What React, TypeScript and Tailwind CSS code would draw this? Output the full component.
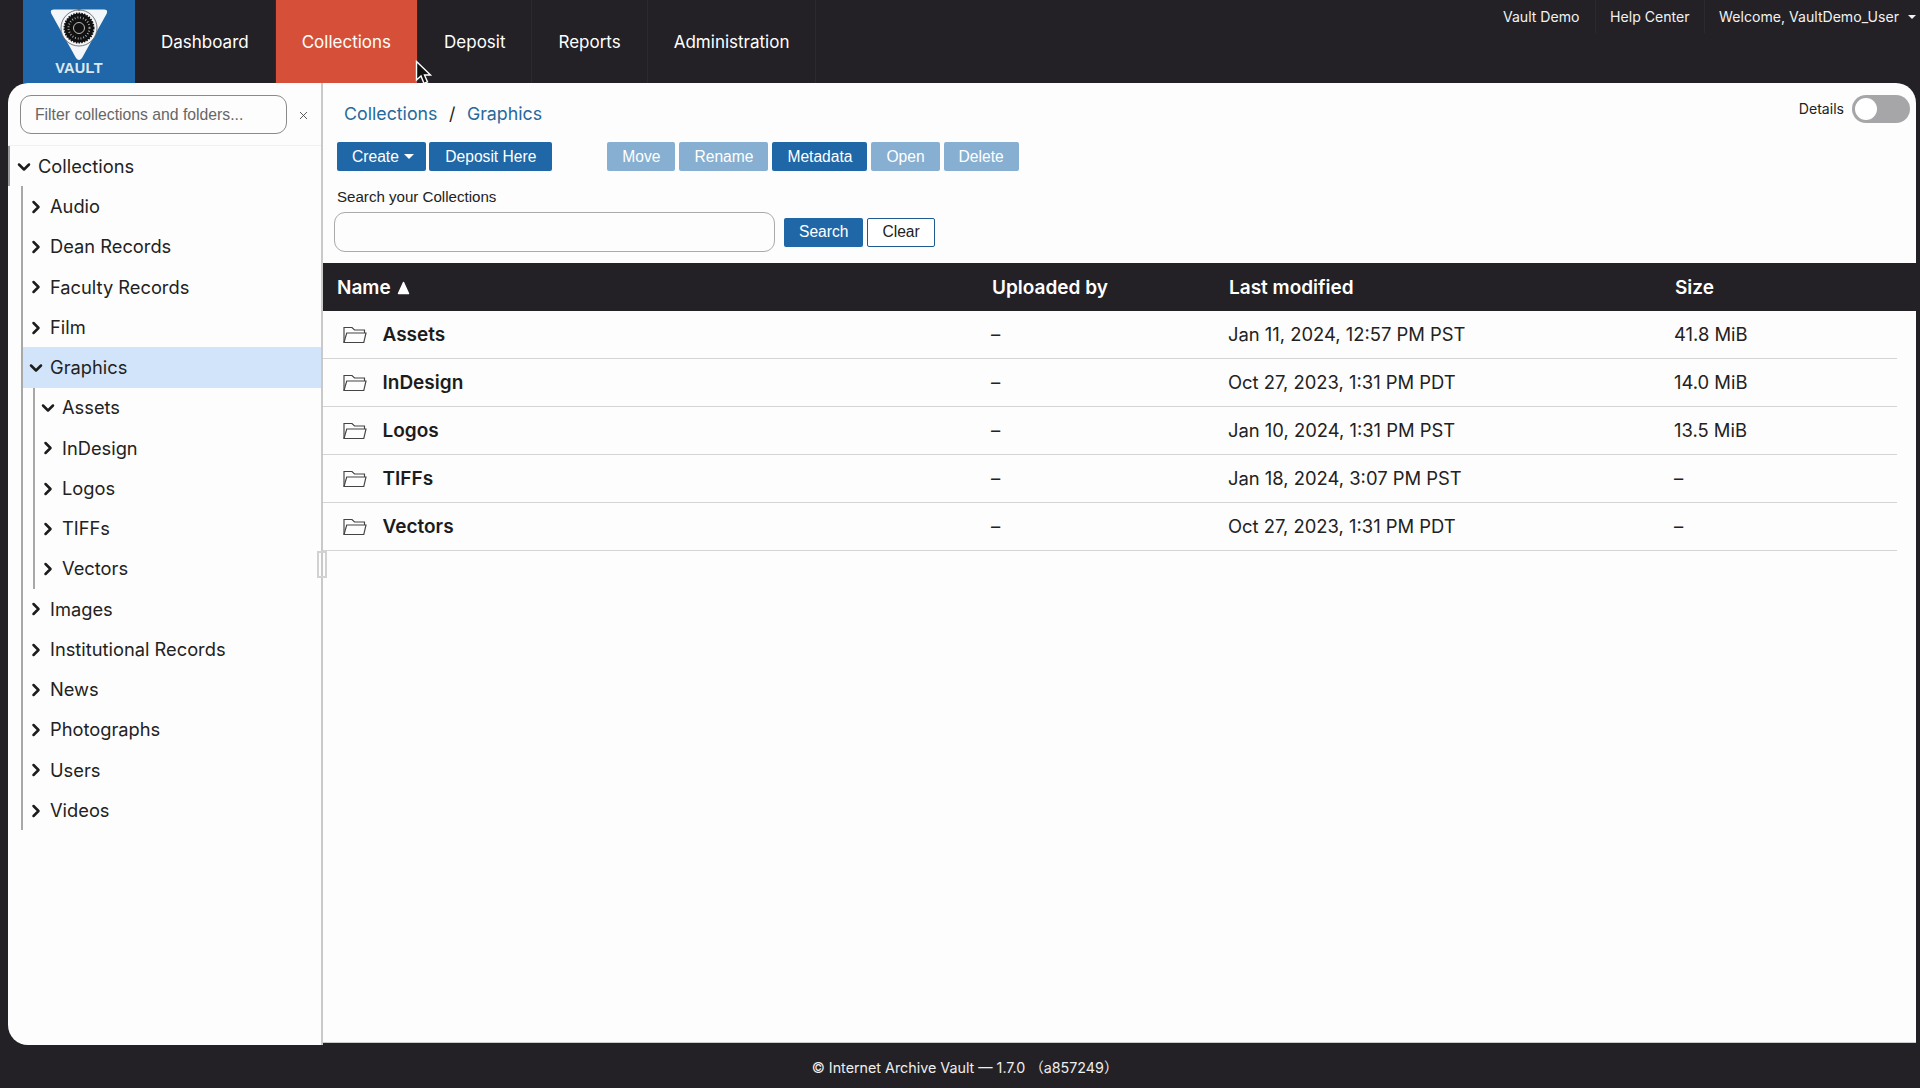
import { ChevronDown, ChevronRight, X } from "lucide-react";

const inter = "font-['Inter','Noto_Sans_CJK_SC',sans-serif]";
const arial = "font-['Liberation_Sans',Arial,sans-serif]";

const Caret = ({ big }: { big?: boolean }) => (
  <span
    className={`inline-block h-0 w-0 border-x-transparent border-t-current ${
      big ? "border-x-[5px] border-t-[5px]" : "border-x-[4px] border-t-[4px]"
    }`}
  />
);

const Logo = () => (
  <div className="flex h-full w-[112px] flex-col items-center bg-[#1f67a8]">
    <svg width="60" height="53" viewBox="0 0 60 53" className="mt-[8px] shrink-0">
      <path
        d="M5 1.5 H55 Q59.5 1.5 57.5 6 L33 50 Q30 54 27 50 L2.5 6 Q.5 1.5 5 1.5Z"
        fill="#f4f7fa"
      />
      <circle cx="30" cy="20" r="18" fill="#f4f7fa" stroke="#55575c" strokeWidth="0.8" />
      <circle cx="30" cy="20" r="14.5" fill="#111" stroke="#111" strokeDasharray="1.5 1.2" strokeWidth="2" />
      <circle cx="30" cy="20" r="10.5" fill="none" stroke="#bbb" strokeDasharray="0.8 2" strokeWidth="2" />
      <circle cx="30" cy="20" r="5.5" fill="none" stroke="#e4e4e4" strokeWidth="0.8" />
      <circle cx="30" cy="1.5" r="1" fill="none" stroke="#555" strokeWidth="0.7" />
    </svg>
    <div className={`${arial} text-[14.5px] leading-[14px] font-bold tracking-[0.3px] text-[#dce9f3]`}>
      VAULT
    </div>
  </div>
);

const navItems = ["Dashboard", "Collections", "Deposit", "Reports", "Administration"];

const Header = () => (
  <header className={`${inter} flex h-[83px] shrink-0 pl-[23px] text-white`}>
    <Logo />
    <nav className="flex text-[17px]">
      {navItems.map((item) => (
        <a
          key={item}
          className={`flex items-center border-r border-[#2c2a30] px-[26px] pt-[3px] ${
            item === "Collections" ? "bg-[#d64f38]" : ""
          }`}
        >
          {item}
        </a>
      ))}
    </nav>
    <div className="ml-auto flex h-[33px] items-center text-[14.1px] text-[#f1f1f1]">
      <span className="flex h-full items-center border-r border-[#2c2a30] pr-[15px]">Vault Demo</span>
      <span className="flex h-full items-center border-r border-[#2c2a30] px-[14.5px]">Help Center</span>
      <span className="flex h-full items-center pl-[14px]">Welcome, VaultDemo_User</span>
      <span className="mr-[4px] ml-[9px] flex">
        <Caret />
      </span>
    </div>
  </header>
);

type Node = { name: string; open?: boolean; active?: boolean; children?: string[] };

const topLevel: Node[] = [
  { name: "Audio" },
  { name: "Dean Records" },
  { name: "Faculty Records" },
  { name: "Film" },
  { name: "Graphics", open: true, active: true, children: ["InDesign", "Logos", "TIFFs", "Vectors"] },
  { name: "Images" },
  { name: "Institutional Records" },
  { name: "News" },
  { name: "Photographs" },
  { name: "Users" },
  { name: "Videos" },
];

const TreeRow = ({ name, open, active, root }: { name: string; open?: boolean; active?: boolean; root?: boolean }) => (
  <div
    className={`flex h-[40.25px] items-center gap-[4.5px] pt-[1px] text-[18.3px] text-[#222] ${
      root ? "pl-[3.5px]" : "pl-[2.5px]"
    } ${active ? "bg-[#d2e4fa]" : ""}`}
  >
    <span className="flex w-[20px] shrink-0 justify-center">
      {open ? (
        <ChevronDown size={22} strokeWidth={3} color="#1c1c1c" />
      ) : (
        <ChevronRight size={22} strokeWidth={3} color="#1c1c1c" />
      )}
    </span>
    {name}
  </div>
);

const Sidebar = () => (
  <aside className={`${inter} relative z-10 flex w-[315px] shrink-0 flex-col rounded-l-[20px] border-r-2 border-[#c9c9c9] bg-[#fdfdfd]`}>
    <div className="flex h-[63px] shrink-0 items-start border-b border-[#f1f1f1] pt-[12px] pl-[12px]">
      <input
        placeholder="Filter collections and folders..."
        className={`${arial} h-[39px] w-[267px] rounded-[11px] border border-[#8a8a8a] px-[14px] text-[15.75px] placeholder:text-[#666]`}
      />
      <span className="mt-[14px] ml-[10px] text-[#444]">
        <X size={13} strokeWidth={1.6} />
      </span>
    </div>
    <div className="h-[40.25px] border-l-2 border-[#9a9a9a]">
      <TreeRow name="Collections" open root />
    </div>
    <div className="ml-[13px] border-l-2 border-[#a8a8a8]">
      {topLevel.map((node) => (
        <div key={node.name}>
          <TreeRow name={node.name} open={node.open} active={node.active} />
          {node.children && (
            <div className="ml-[10px] border-l-2 border-[#a8a8a8]">
              <TreeRow name="Assets" open />
              {node.children.map((child) => (
                <TreeRow key={child} name={child} />
              ))}
            </div>
          )}
        </div>
      ))}
    </div>
    <div className="absolute top-[468px] right-[-6px] h-[27px] w-[10px] border-2 border-[#d2d2d2]" />
  </aside>
);

const Btn = ({ label, dim, caret, wide }: { label: string; dim?: boolean; caret?: boolean; wide?: boolean }) => (
  <button
    className={`flex h-[29px] items-center gap-[5px] rounded-[2px] text-[15.6px] text-white ${
      wide ? "px-[16px]" : "px-[15px]"
    } ${caret ? "pr-[12.5px]" : ""} ${dim ? "bg-[#86afd1] text-[#e4edf5]" : "bg-[#1f67a6]"}`}
  >
    {label}
    {caret && <Caret big />}
  </button>
);

const FolderIcon = () => (
  <svg width="24" height="18" viewBox="0 0 24 18" fill="none" stroke="#444" strokeWidth="1.15" className="shrink-0">
    <path d="M1 16.5 V1.5 H9 L11.5 4 H21.5 V7" />
    <path d="M3.7 7 H23 L20.8 16.5 H1 Z" />
  </svg>
);

const rows = [
  { name: "Assets", modified: "Jan 11, 2024, 12:57 PM PST", size: "41.8 MiB" },
  { name: "InDesign", modified: "Oct 27, 2023, 1:31 PM PDT", size: "14.0 MiB" },
  { name: "Logos", modified: "Jan 10, 2024, 1:31 PM PST", size: "13.5 MiB" },
  { name: "TIFFs", modified: "Jan 18, 2024, 3:07 PM PST", size: "–" },
  { name: "Vectors", modified: "Oct 27, 2023, 1:31 PM PDT", size: "–" },
];

const Main = () => (
  <section className="relative mb-[2px] flex min-w-0 flex-1 flex-col rounded-tr-[20px] border-b border-[#c9c9c9] bg-[#fdfdfd]">
    <div className="absolute top-[12px] right-[6px] flex items-center gap-[8px]">
      <span className={`${inter} mb-[1px] text-[14.1px] text-[#222]`}>Details</span>
      <div className="flex h-[28px] w-[58px] items-center rounded-full bg-[#a6a6a9] pl-[3px]">
        <div className="h-[22px] w-[22px] rounded-full bg-white" />
      </div>
    </div>
    <div className={`${inter} flex h-[59px] items-end gap-[11.5px] pb-[14px] pl-[21px] text-[17.8px] text-[#222]`}>
      <a className="text-[#26699c]">Collections</a>
      <span>/</span>
      <a className="text-[#26699c]">Graphics</a>
    </div>
    <div className={`${arial} flex pl-[14px]`}>
      <div className="flex gap-[3px]">
        <Btn label="Create" caret />
        <Btn label="Deposit Here" wide />
      </div>
      <div className="ml-[55px] flex gap-[4px]">
        <Btn label="Move" dim />
        <Btn label="Rename" dim />
        <Btn label="Metadata" />
        <Btn label="Open" dim />
        <Btn label="Delete" dim />
      </div>
    </div>
    <label className={`${arial} mt-[17px] pl-[14px] text-[15.1px] leading-[17px] text-[#222]`}>
      Search your Collections
    </label>
    <div className={`${arial} mt-[7px] flex items-center pl-[11px]`}>
      <input className="h-[40px] w-[441px] rounded-[11px] border border-[#aaa]" />
      <div className="ml-[9px] flex h-[29px] items-center rounded-[2px] bg-[#1f67a6] px-[15px] text-[15.6px] text-white">
        Search
      </div>
      <div className="ml-[4px] flex h-[29px] items-center rounded-[2px] border border-[#1f5b8f] bg-white px-[14px] text-[15.6px] text-[#222]">
        Clear
      </div>
    </div>
    <div className={`${inter} mt-[11px] grid h-[48px] shrink-0 grid-cols-[669px_237px_446px_1fr] items-center bg-[#232126] pt-[2.5px] text-[19px] font-semibold text-white`}>
      <div className="flex items-center gap-[6px] pl-[14px]">
        Name
        <svg width="13" height="14" viewBox="0 0 13 14" fill="#fff" stroke="#fff" strokeWidth="1.5" strokeLinejoin="round">
          <path d="M6.5 1.5 L11.5 12.5 H1.5 Z" />
        </svg>
      </div>
      <div>Uploaded by</div>
      <div>Last modified</div>
      <div>Size</div>
    </div>
    <div className={`${inter} mr-[19px] text-[18.4px] text-[#222]`}>
      {rows.map((row) => (
        <div
          key={row.name}
          className="grid h-[48px] grid-cols-[668px_237px_446px_1fr] items-center border-b border-[#d4d4d4]"
        >
          <div className="flex items-center gap-[15.5px] pl-[20px] text-[19px] font-semibold text-[#1c1c1c]">
            <FolderIcon />
            <span className="pt-[1.5px]">{row.name}</span>
          </div>
          <div>–</div>
          <div>{row.modified}</div>
          <div>{row.size}</div>
        </div>
      ))}
    </div>
  </section>
);

const Cursor = () => (
  <svg width="18" height="26" viewBox="0 0 18 26" className="absolute top-[60px] left-[415px] z-20">
    <path d="M1.5 1.5 V20 L6 16 L9 23.5 L12.5 22 L9.5 15 H15.5 Z" fill="#111" stroke="#fff" strokeWidth="1.4" />
  </svg>
);

export default function App() {
  return (
    <div className="relative flex h-screen flex-col overflow-hidden bg-[#232126]">
      <Header />
      <main className="mr-[4px] ml-[8px] flex min-h-0 flex-1">
        <Sidebar />
        <Main />
      </main>
      <footer className={`${inter} flex h-[43px] shrink-0 items-center justify-center pt-[2px] pl-[10px] text-[14.3px] text-[#eee]`}>
        © Internet Archive Vault — 1.7.0 （a857249）
      </footer>
      <Cursor />
    </div>
  );
}
